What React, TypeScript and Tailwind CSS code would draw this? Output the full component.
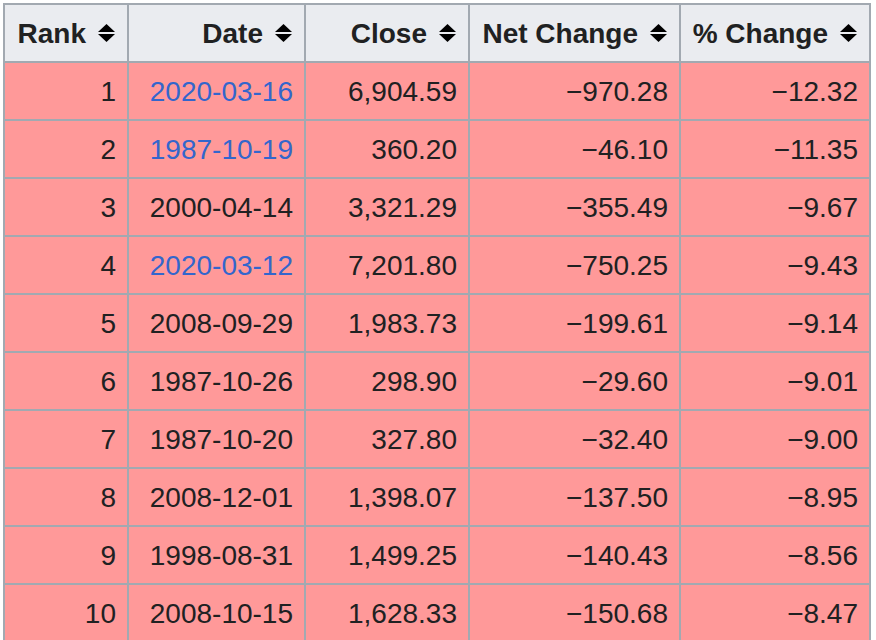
const rows = [
  { rank: 1, date: '2020-03-16', link: true, close: '6,904.59', net: '−970.28', pct: '−12.32' },
  { rank: 2, date: '1987-10-19', link: true, close: '360.20', net: '−46.10', pct: '−11.35' },
  { rank: 3, date: '2000-04-14', link: false, close: '3,321.29', net: '−355.49', pct: '−9.67' },
  { rank: 4, date: '2020-03-12', link: true, close: '7,201.80', net: '−750.25', pct: '−9.43' },
  { rank: 5, date: '2008-09-29', link: false, close: '1,983.73', net: '−199.61', pct: '−9.14' },
  { rank: 6, date: '1987-10-26', link: false, close: '298.90', net: '−29.60', pct: '−9.01' },
  { rank: 7, date: '1987-10-20', link: false, close: '327.80', net: '−32.40', pct: '−9.00' },
  { rank: 8, date: '2008-12-01', link: false, close: '1,398.07', net: '−137.50', pct: '−8.95' },
  { rank: 9, date: '1998-08-31', link: false, close: '1,499.25', net: '−140.43', pct: '−8.56' },
  { rank: 10, date: '2008-10-15', link: false, close: '1,628.33', net: '−150.68', pct: '−8.47' },
];

const SortIcon = () => (
  <svg width="17" height="18" viewBox="0 0 17 18" className="shrink-0">
    <polygon points="0,8 8.5,0 17,8" fill="#000" />
    <polygon points="0,10 8.5,18 17,10" fill="#000" />
  </svg>
);

const Header = ({ label, width }: { label: string; width: string }) => (
  <th className={`${width} h-[56px] bg-[#eaecf0] p-0 font-bold`}>
    <div className="flex items-center justify-end gap-[12px] pr-[12px]">
      <span className="pt-[2px]">{label}</span>
      <SortIcon />
    </div>
  </th>
);

const cell = 'h-[56px] bg-[#ff9999] p-0 pt-[2px] pr-[11px] text-right align-middle';

export default function App() {
  return (
    <div className="bg-white h-[640px] overflow-hidden pl-[3px] pt-[3px] font-['Liberation_Sans',Arial,sans-serif] text-[28px] leading-none text-[#202122]">
      <table className="w-[868px] table-fixed border-separate border-spacing-[2px] bg-[#a2a9b1]">
        <thead>
          <tr>
            <Header label="Rank" width="w-[122px]" />
            <Header label="Date" width="w-[175px]" />
            <Header label="Close" width="w-[162px]" />
            <Header label="Net Change" width="w-[209px]" />
            <Header label="% Change" width="w-[188px]" />
          </tr>
        </thead>
        <tbody>
          {rows.map((r) => (
            <tr key={r.rank}>
              <td className={cell}>{r.rank}</td>
              <td className={cell}>
                {r.link ? <span className="text-[#3366cc]">{r.date}</span> : r.date}
              </td>
              <td className={cell}>{r.close}</td>
              <td className={cell}>{r.net}</td>
              <td className={cell}>{r.pct}</td>
            </tr>
          ))}
        </tbody>
      </table>
    </div>
  );
}
